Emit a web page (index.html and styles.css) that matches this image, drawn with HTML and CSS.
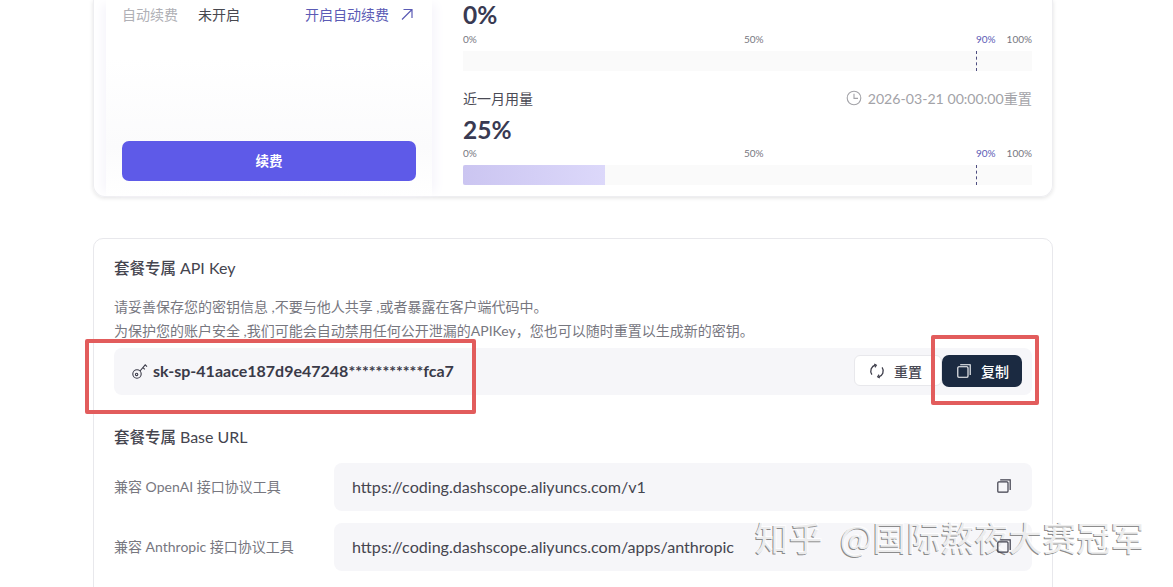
FILE: index.html
```html
<!DOCTYPE html>
<html lang="zh-CN">
<head>
  <meta charset="UTF-8">
  <title>套餐专属 API Key</title>
  <link rel="stylesheet" href="styles.css">
</head>
<body>
  <div class="page">
    <div class="plan-card">
      <div class="plan-side">
        <div class="renew-row">
          <span class="renew-label">自动续费</span>
          <span class="renew-value">未开启</span>
          <a class="renew-link">开启自动续费
            <svg width="14" height="14" viewBox="0 0 14 14" fill="none" stroke="#5b5bb5" stroke-width="1.2"><path d="M2 12.5 12 2.5M3.5 2.5H12V11"/></svg>
          </a>
        </div>
        <button class="renew-btn">续费</button>
      </div>
      <div class="plan-usage">
        <div class="usage usage-first">
          <div class="usage-num">0%</div>
          <div class="scale"><span>0%</span><span>50%</span><span class="warn">90%</span><span>100%</span></div>
          <div class="bar"><i class="mark"></i></div>
        </div>
        <div class="usage">
          <div class="usage-head">
            <span class="usage-title">近一月用量</span>
            <span class="usage-reset">
              <svg width="16" height="16" viewBox="0 0 16 16" fill="none" stroke="#a3a3a8" stroke-width="1.1"><circle cx="8" cy="8" r="6.8"/><path d="M8 3.8V8.4H12"/></svg>
              2026-03-21 00:00:00重置
            </span>
          </div>
          <div class="usage-num">25%</div>
          <div class="scale"><span>0%</span><span>50%</span><span class="warn">90%</span><span>100%</span></div>
          <div class="bar"><div class="fill" style="width: 142px"></div><i class="mark"></i></div>
        </div>
      </div>
    </div>

    <div class="key-card">
      <h2>套餐专属 <span>API Key</span></h2>
      <p class="desc">请妥善保存您的密钥信息 ,不要与他人共享 ,或者暴露在客户端代码中。</p>
      <p class="desc">为保护您的账户安全 ,我们可能会自动禁用任何公开泄漏的APIKey，您也可以随时重置以生成新的密钥。</p>
      <div class="key-row">
        <svg class="key-icon" width="16" height="16" viewBox="0 0 16 16" fill="none" stroke="#3a3a48" stroke-width="1.1"><circle cx="5" cy="11" r="4.2"/><circle cx="4.6" cy="11.4" r="1.2"/><path d="M8 8 13.2 1.8 15 3.6M11 4.6l1.8 1.8"/></svg>
        <span class="key-text">sk-sp-41aace187d9e47248***********fca7</span>
        <button class="btn-reset">
          <svg width="16" height="16" viewBox="0 0 16 16" fill="none" stroke="#3f3f4c" stroke-width="1.3"><path d="M2.9 11.6A6.2 6.2 0 0 1 6.6 2M13.1 4.4A6.2 6.2 0 0 1 9.4 14"/><path d="M5.2 1 7.4 2.2 6 4.4M10.8 15 8.6 13.8 10 11.6" stroke-width="1.1"/></svg>
          重置
        </button>
        <button class="btn-copy">
          <svg width="14" height="14" viewBox="0 0 14 14" fill="none" stroke="#fff" stroke-width="1.1"><rect x="0.8" y="2.8" width="10.2" height="10.4" rx="1"/><path d="M3.2.8H13.2V11"/></svg>
          复制
        </button>
      </div>

      <h2 class="url-title">套餐专属 <span>Base URL</span></h2>
      <div class="url-row">
        <span class="url-label">兼容 OpenAI 接口协议工具</span>
        <div class="url-box">
          <span>https://coding.dashscope.aliyuncs.com/v1</span>
          <svg width="14" height="14" viewBox="0 0 14 14" fill="none" stroke="#3f3f4c" stroke-width="1.2"><rect x="0.8" y="2.8" width="10.2" height="10.4" rx="1"/><path d="M3.2.8H13.2V11"/></svg>
        </div>
      </div>
      <div class="url-row">
        <span class="url-label">兼容 Anthropic 接口协议工具</span>
        <div class="url-box">
          <span>https://coding.dashscope.aliyuncs.com/apps/anthropic</span>
          <svg width="14" height="14" viewBox="0 0 14 14" fill="none" stroke="#3f3f4c" stroke-width="1.2"><rect x="0.8" y="2.8" width="10.2" height="10.4" rx="1"/><path d="M3.2.8H13.2V11"/></svg>
        </div>
      </div>
    </div>
  </div>

  <div class="note note-key"></div>
  <div class="note note-copy"></div>
  <div class="watermark">知乎 @国际熬夜大赛冠军</div>
</body>
</html>
```

FILE: styles.css
```css
html, body {
  margin: 0;
  height: 587px;
  overflow: hidden;
}
body {
  position: relative;
  background: #fff;
  color: #3a3a48;
  font-family: Lato, "Noto Sans CJK SC", sans-serif;
}
.page {
  width: 968px;
  height: 587px;
  box-sizing: border-box;
  padding: 0 4px;
  margin-left: 89px;
  overflow: hidden;
}
.plan-card {
  display: flex;
  height: 197px;
  box-sizing: border-box;
  border: 1px solid #eeeef1;
  border-top: none;
  border-radius: 0 0 12px 12px;
  box-shadow: 0 1px 4px rgba(0, 0, 0, 0.12);
}
.plan-side {
  display: flex;
  flex-direction: column;
  justify-content: space-between;
  width: 326px;
  height: 196px;
  box-sizing: border-box;
  margin-left: 12px;
  padding: 0 16px 15px;
  background: linear-gradient(to bottom, #fff 30%, #fbfbfc 75%, #fff);
  box-shadow: -8px 0 10px -4px #f6f5fb, 8px 0 10px -4px #f6f5fb;
}
.renew-row {
  display: flex;
  align-items: center;
  height: 27px;
  font-size: 14px;
}
.renew-label {
  width: 76px;
  color: #b0b0b6;
}
.renew-value {
  color: #48484f;
}
.renew-link {
  display: flex;
  align-items: center;
  gap: 11px;
  margin-left: auto;
  padding-right: 2px;
  color: #5b5bb5;
}
.renew-btn {
  height: 40px;
  padding: 0 0 2px;
  border: none;
  border-radius: 7px;
  background: #5e5ae8;
  color: #fff;
  font: bold 13.5px Lato, "Noto Sans CJK SC", sans-serif;
}
.plan-usage {
  flex: 1;
  margin-left: 31px;
  padding-right: 20px;
}
.usage-first {
  height: 88px;
}
.usage-head {
  display: flex;
  justify-content: space-between;
  align-items: center;
  height: 20px;
  font-size: 14px;
}
.usage-title {
  color: #4a4a55;
}
.usage-reset {
  display: flex;
  align-items: center;
  gap: 6px;
  font-size: 14.15px;
  color: #a3a3a8;
}
.usage-num {
  height: 30px;
  line-height: 30px;
  font-size: 24.5px;
  font-weight: bold;
  color: #393a52;
}
.usage-head + .usage-num {
  height: 29px;
  margin-top: 7px;
}
.scale {
  display: grid;
  grid-template-columns: 281px 232px 1fr auto;
  height: 12px;
  margin-top: 3px;
  line-height: 12px;
  font-size: 10px;
  color: #77777f;
}
.scale .warn {
  color: #5b5bb5;
}
.bar {
  position: relative;
  height: 20px;
  margin-top: 6px;
  background: #fafafa;
}
.fill {
  height: 100%;
  border-radius: 2px 0 0 2px;
  background: linear-gradient(to right, #cbc5f1, #dcd8fa);
}
.mark {
  position: absolute;
  left: 513px;
  top: 0;
  height: 100%;
  border-left: 1px dashed #4d4d80;
}
.key-card {
  height: 380px;
  box-sizing: border-box;
  margin-top: 41px;
  padding: 19px 20px 0;
  border: 1px solid #e8e8ec;
  border-radius: 10px;
}
h2 {
  margin: 0;
  height: 20px;
  line-height: 20px;
  font-size: 15.5px;
  font-weight: 500;
  color: #45454f;
}
h2 span {
  font-size: 16px;
  font-weight: normal;
}
.desc {
  margin: 0;
  height: 24px;
  line-height: 24px;
  font-size: 14px;
  color: #77777f;
}
h2 + .desc {
  margin-top: 17px;
}
.key-row {
  display: flex;
  align-items: center;
  height: 47px;
  box-sizing: border-box;
  margin-top: 5px;
  padding: 0 10px 2px 18px;
  border-radius: 8px;
  background: #f6f6f9;
}
.key-icon {
  margin-right: 5px;
}
.key-text {
  font-size: 16px;
  font-weight: bold;
  color: #3a3a48;
}
.btn-reset, .btn-copy {
  display: flex;
  align-items: center;
  font: 500 14px Lato, "Noto Sans CJK SC", sans-serif;
}
.btn-reset {
  gap: 9px;
  height: 31px;
  margin-left: auto;
  padding: 0 19px 0 14px;
  border: 1px solid #e8e8ec;
  border-radius: 6px;
  background: #fff;
  color: #4a4a55;
}
.btn-copy {
  gap: 10px;
  height: 32px;
  padding: 0 13px 0 15px;
  border: none;
  border-radius: 7px;
  background: #1b2a41;
  color: #fff;
}
.url-title {
  margin-top: 32px;
  margin-bottom: 16px;
}
.url-row {
  display: flex;
  align-items: center;
  height: 48px;
  margin-bottom: 12px;
}
.url-label {
  width: 220px;
  padding-bottom: 2px;
  font-size: 14px;
  color: #77777f;
}
.url-box {
  flex: 1;
  display: flex;
  justify-content: space-between;
  align-items: center;
  height: 48px;
  box-sizing: border-box;
  padding: 0 21px 2px 18px;
  border-radius: 8px;
  background: #f6f6f9;
  font-size: 16.1px;
  color: #45454f;
}
.url-box svg {
  position: relative;
  z-index: 1;
}
.note {
  position: absolute;
  box-sizing: border-box;
  border: 4px solid #e25c5c;
  border-radius: 2px;
}
.note-key {
  left: 85px;
  top: 339px;
  width: 391px;
  height: 75px;
}
.note-copy {
  left: 931px;
  top: 335px;
  width: 108px;
  height: 70px;
}
.watermark {
  position: absolute;
  left: 755px;
  top: 514px;
  font-family: "Noto Sans CJK SC", sans-serif;
  font-size: 34px;
  font-weight: 500;
  line-height: 46px;
  word-spacing: 9px;
  white-space: nowrap;
  color: rgba(255, 255, 255, 0.85);
  text-shadow: -1px 1px 0 rgba(110, 110, 110, 0.8);
}
```
